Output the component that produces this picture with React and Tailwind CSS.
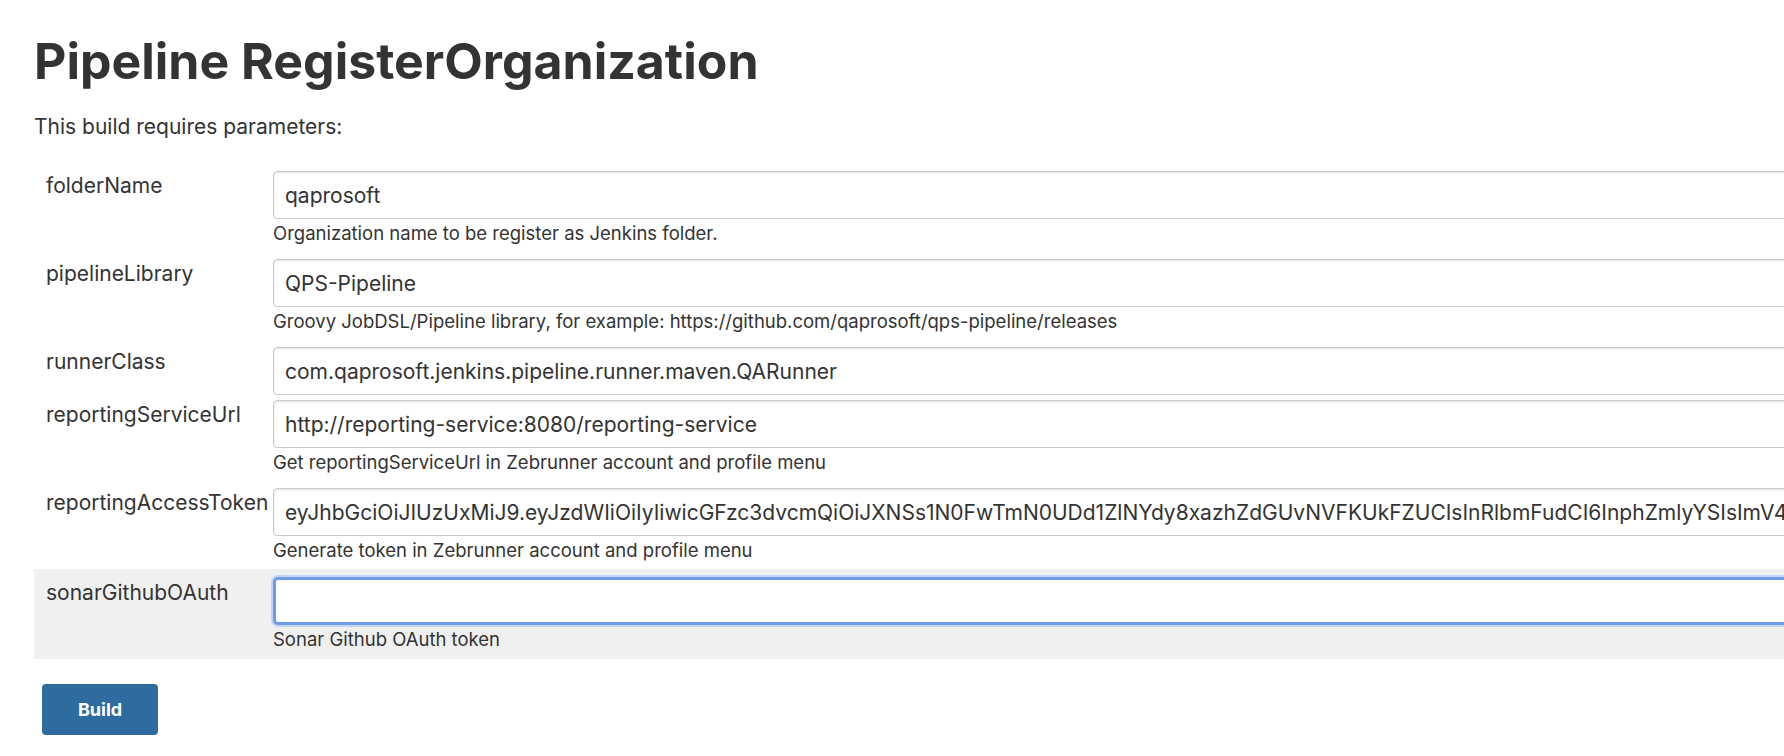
const params = [
  {
    name: 'folderName',
    value: 'qaprosoft',
    desc: 'Organization name to be register as Jenkins folder.',
  },
  {
    name: 'pipelineLibrary',
    value: 'QPS-Pipeline',
    desc: 'Groovy JobDSL/Pipeline library, for example: https://github.com/qaprosoft/qps-pipeline/releases',
  },
  {
    name: 'runnerClass',
    value: 'com.qaprosoft.jenkins.pipeline.runner.maven.QARunner',
  },
  {
    name: 'reportingServiceUrl',
    value: 'http://reporting-service:8080/reporting-service',
    desc: 'Get reportingServiceUrl in Zebrunner account and profile menu',
  },
  {
    name: 'reportingAccessToken',
    value:
      'eyJhbGciOiJIUzUxMiJ9.eyJzdWIiOiIyIiwicGFzc3dvcmQiOiJXNSs1N0FwTmN0UDd1ZlNYdy8xazhZdGUvNVFKUkFZUCIsInRlbmFudCI6InphZmlyYSIsImV4cCI6MTg5NzA0NjQ0M30',
    desc: 'Generate token in Zebrunner account and profile menu',
  },
]

function ParamRow({ name, value, desc }) {
  return (
    <div className="flex pt-[3px] pb-[2px]">
      <div className="w-[239px] shrink-0 pl-3 pt-[2px] text-[21px] leading-[26px]">{name}</div>
      <div className="w-[1600px] shrink-0">
        <input
          readOnly
          defaultValue={value}
          className="block w-full h-12 px-[11px] rounded border border-[#c9c9c9] shadow-[inset_0_1px_2px_rgba(0,0,0,0.12)] bg-white text-[21px] text-[#333] outline-none"
        />
        {desc && <div className="mt-[3px] mb-[10px] text-[18.5px] leading-[22px]">{desc}</div>}
      </div>
    </div>
  )
}

export default function App() {
  return (
    <div
      className="w-full min-h-screen overflow-clip bg-white text-[#333]"
      style={{ fontFamily: 'Inter, "Noto Sans", sans-serif' }}
    >
      <div className="pl-[34px] pt-[31px]">
        <h1 className="text-[50px] font-bold leading-[60px] whitespace-nowrap">Pipeline RegisterOrganization</h1>
        <p className="mt-[24px] text-[21px] leading-6">This build requires parameters:</p>

        <div className="mt-[29px] w-[1900px]">
          {params.map((p) => (
            <ParamRow key={p.name} {...p} />
          ))}

          {/* focused row */}
          <div className="flex bg-[#f0f0f0] pt-2 pb-[9px] mt-[-4px]">
            <div className="w-[239px] shrink-0 pl-3 pt-[3px] text-[21px] leading-[26px]">sonarGithubOAuth</div>
            <div className="w-[1600px] shrink-0">
              <input className="block w-full h-12 px-[11px] rounded-[5px] border-[3px] border-[#6f9be8] shadow-[0_0_0_2px_#c2d5f6] bg-white text-[21px] outline-none" />
              <div className="mt-[3px] text-[18.5px] leading-[22px]">Sonar Github OAuth token</div>
            </div>
          </div>
        </div>

        <button className="mt-[25px] ml-2 w-[116px] h-[51px] rounded bg-[#2e6b9e] text-white text-[18px] font-bold">
          Build
        </button>
      </div>
    </div>
  )
}
